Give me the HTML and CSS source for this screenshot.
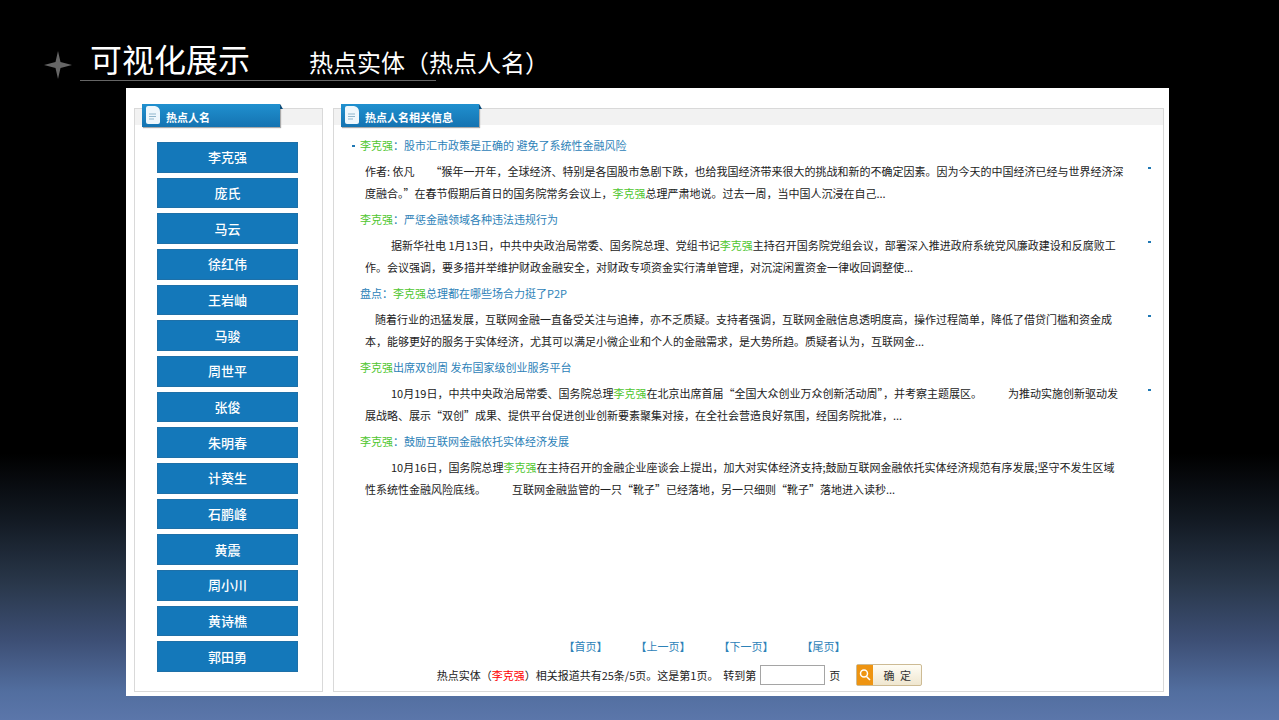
FILE: index.html
```
<!DOCTYPE html>
<html lang="zh-CN">
<head>
<meta charset="utf-8">
<title>可视化展示</title>
<link rel="stylesheet" href="styles.css">
</head>
<body>
<header class="slide-head">
<svg class="star" viewBox="0 0 28 28" aria-hidden="true"><path d="M14 0 L16.5 11 L28 14 L16.5 17 L14 28 L11.5 17 L0 14 L11.5 11 Z"/></svg>
<div class="titles"><h1>可视化展示</h1><p class="subtitle">热点实体（热点人名）</p></div>
</header>
<main class="board">
<section class="panel names">
<h2 class="tab"><svg class="doc" viewBox="0 0 14 18" aria-hidden="true"><path class="paper" d="M2 0H9Q14 1 14 6V16Q14 18 12 18H2Q0 18 0 16V2Q0 0 2 0Z"/><path class="rule" d="M3 8H10M3 10.5H10M3 13H8"/></svg>热点人名</h2>
<nav class="name-list">
<button>李克强</button><button>庞氏</button><button>马云</button><button>徐红伟</button><button>王岩岫</button><button>马骏</button><button>周世平</button><button>张俊</button><button>朱明春</button><button>计葵生</button><button>石鹏峰</button><button>黄震</button><button>周小川</button><button>黄诗樵</button><button>郭田勇</button>
</nav>
</section>
<section class="panel info">
<h2 class="tab"><svg class="doc" viewBox="0 0 14 18" aria-hidden="true"><path class="paper" d="M2 0H9Q14 1 14 6V16Q14 18 12 18H2Q0 18 0 16V2Q0 0 2 0Z"/><path class="rule" d="M3 8H10M3 10.5H10M3 13H8"/></svg>热点人名相关信息</h2>
<div class="news">
<article><h3 class="first"><a href="#"><em>李克强</em>：股市汇市政策是正确的 避免了系统性金融风险</a></h3>
<div class="row"><p>作者: 依凡 &emsp;&nbsp;“猴年一开年，全球经济、特别是各国股市急剧下跌，也给我国经济带来很大的挑战和新的不确定因素。因为今天的中国经济已经与世界经济深<br>度融合。”在春节假期后首日的国务院常务会议上，<em>李克强</em>总理严肃地说。过去一周，当中国人沉浸在自己...</p><i class="dot"></i></div></article>
<article><h3><a href="#"><em>李克强</em>：严惩金融领域各种违法违规行为</a></h3>
<div class="row"><p><span class="indent"></span>据新华社电 1月13日，中共中央政治局常委、国务院总理、党组书记<em>李克强</em>主持召开国务院党组会议，部署深入推进政府系统党风廉政建设和反腐败工<br>作。会议强调，要多措并举维护财政金融安全，对财政专项资金实行清单管理，对沉淀闲置资金一律收回调整使...</p><i class="dot"></i></div></article>
<article><h3><a href="#">盘点：<em>李克强</em>总理都在哪些场合力挺了P2P</a></h3>
<div class="row"><p><span class="indent short"></span>随着行业的迅猛发展，互联网金融一直备受关注与追捧，亦不乏质疑。支持者强调，互联网金融信息透明度高，操作过程简单，降低了借贷门槛和资金成<br>本，能够更好的服务于实体经济，尤其可以满足小微企业和个人的金融需求，是大势所趋。质疑者认为，互联网金...</p><i class="dot"></i></div></article>
<article><h3><a href="#"><em>李克强</em>出席双创周 发布国家级创业服务平台</a></h3>
<div class="row"><p><span class="indent"></span>10月19日，中共中央政治局常委、国务院总理<em>李克强</em>在北京出席首届“全国大众创业万众创新活动周”，并考察主题展区。<span class="indent"></span>为推动实施创新驱动发<br>展战略、展示“双创”成果、提供平台促进创业创新要素聚集对接，在全社会营造良好氛围，经国务院批准，...</p><i class="dot"></i></div></article>
<article><h3><a href="#"><em>李克强</em>：鼓励互联网金融依托实体经济发展</a></h3>
<div class="row"><p><span class="indent"></span>10月16日，国务院总理<em>李克强</em>在主持召开的金融企业座谈会上提出，加大对实体经济支持;鼓励互联网金融依托实体经济规范有序发展;坚守不发生区域<br>性系统性金融风险底线。<span class="indent"></span>互联网金融监管的一只“靴子”已经落地，另一只细则“靴子”落地进入读秒...</p></div></article>
</div>
<nav class="pages"><a href="#">【首页】</a><a href="#">【上一页】</a><a href="#">【下一页】</a><a href="#">【尾页】</a></nav>
<form class="jump">
<label for="page">热点实体（<strong>李克强</strong>）相关报道共有25条/5页。这是第1页。&nbsp; 转到第</label><input id="page" type="text"><span>页</span>
<button type="button" class="ok"><svg viewBox="0 0 16 20" aria-hidden="true"><rect width="16" height="20"/><circle cx="7" cy="8.500" r="3.500"/><path d="M9.500 11.500L13 15"/></svg><span>确&ensp;定</span></button>
</form>
</section>
</main>
</body>
</html>
```
FILE: styles.css
```
* { box-sizing: border-box; }
body {
  margin: 0;
  min-height: 100vh;
  padding: 40px 110px 24px 44px;
  background: linear-gradient(#000 0%, #000 63%, #121922 72%, #29374a 81%, #3d4f75 89%, #526e9f 96%, #5b76aa 100%);
  font: 11px/22px "Noto Sans CJK SC", sans-serif;
  color: #222;
}
h1, h2, h3, p { margin: 0; font-weight: normal; }
em { font-style: normal; color: #4fc62f; }
a { color: #2d82b8; text-decoration: none; }
button { font-family: inherit; cursor: pointer; }

.slide-head { display: flex; align-items: flex-start; gap: 8px; height: 48px; color: #fff; }
.star { width: 28px; height: 28px; margin-top: 11px; fill: #666; }
.titles {
  flex: 1;
  display: flex;
  align-items: baseline;
  gap: 59px;
  height: 41px;
  padding-left: 10px;
  background: linear-gradient(#666, #666) left bottom / 356px 1px no-repeat;
}
h1, .subtitle { line-height: 36px; }
h1 { font-size: 32px; }
.subtitle { font-size: 24px; }

.board {
  display: flex;
  gap: 10px;
  min-height: 608px;
  margin-left: 82px;
  padding: 20px 5px 4px 8px;
  background: #fff;
}
.panel {
  display: flex;
  flex-direction: column;
  border: 1px solid #d9d9d9;
  background: linear-gradient(#f2f2f2, #f2f2f2) top / 100% 16px no-repeat;
}
.names { width: 189px; }
.info { flex: 1; }
.tab {
  position: relative;
  display: flex;
  align-items: center;
  gap: 6px;
  width: 138px;
  height: 23px;
  margin: -5px 0 0 7px;
  padding: 2px 4px 0;
  background: linear-gradient(#2090cf, #1473b1);
  box-shadow: 1px 1px 1px #aaa;
  color: #fff;
  font-size: 11px;
  font-weight: bold;
}
.tab::after {
  content: "";
  position: absolute;
  left: 100%;
  top: 0;
  border-left: 3px solid #0c4e7d;
  border-top: 5px solid transparent;
}
.doc { width: 14px; height: 18px; margin-top: -4px; }
.paper { fill: #eef7fc; }
.rule { fill: none; stroke: #8fb6cc; }

.name-list { flex: 1; display: grid; grid-auto-rows: 1fr; gap: 5px; margin: 15px 24px 19px 22px; }
.name-list button {
  padding: 0;
  border: 1px solid #1e70a8;
  background: #1478ba;
  color: #fff;
  font-size: 13px;
  line-height: 20px;
  font-weight: 500;
}

.news { padding: 7px 12px 0 26px; }
article { margin-bottom: 4px; }
h3 { margin-bottom: 4px; font-size: 11px; line-height: 22px; }
.first { position: relative; }
.first::before {
  content: "";
  position: absolute;
  left: -8px;
  top: 11px;
  width: 3px;
  height: 2px;
  background: #1f78b4;
}
.row { display: flex; justify-content: space-between; padding-left: 5px; }
.row p { white-space: nowrap; }
.dot { width: 3px; height: 2px; margin-top: 7px; background: #1f78b4; }
.indent { display: inline-block; width: 26px; }
.short { width: 10px; }

.pages { display: flex; justify-content: center; gap: 28px; margin-top: auto; padding-right: 88px; }
.jump { display: flex; align-items: center; justify-content: center; height: 22px; margin: 7px 138px 5px 0; }
.jump strong { color: #f00; font-weight: normal; }
.jump input { width: 65px; height: 20px; margin: 0 4px; border: 1px solid #a5a5a5; font-size: 11px; }
.ok {
  display: flex;
  align-items: center;
  height: 22px;
  margin-left: 16px;
  padding: 0;
  border: 1px solid #cdbb94;
  border-radius: 2px;
  background: linear-gradient(#fffdf5, #efe6cf);
  color: #333;
  font-size: 11px;
}
.ok span { width: 48px; }
.ok svg { width: 16px; height: 20px; fill: none; stroke: #fff; stroke-width: 1.5; }
.ok rect { fill: #ee9411; stroke: none; }
```
